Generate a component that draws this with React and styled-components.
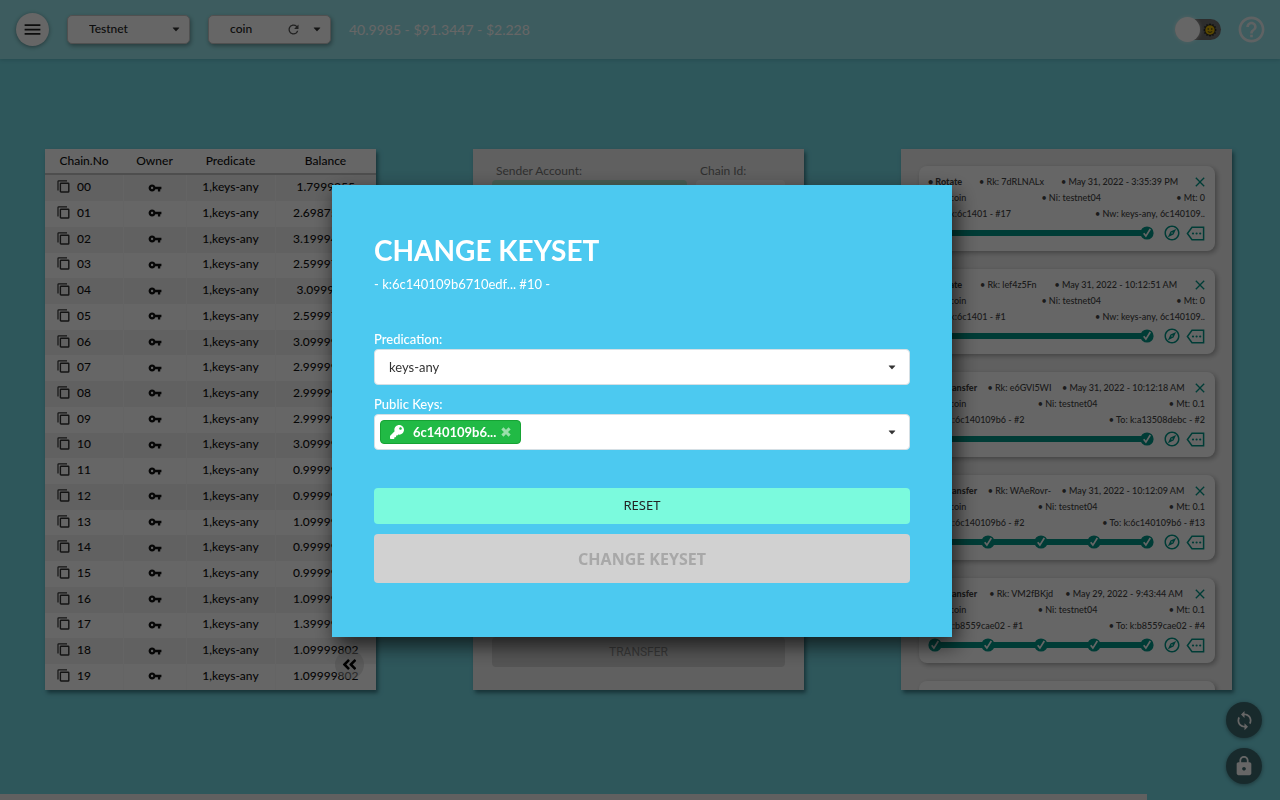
import React from "react";
import styled, { createGlobalStyle } from "styled-components";
import {
  MdMenu,
  MdVpnKey,
  MdSync,
  MdLock,
  MdHelpOutline,
  MdRefresh,
  MdClose,
  MdOutlineExplore,
} from "react-icons/md";
import { FaKey, FaAngleDoubleLeft } from "react-icons/fa";

const GlobalStyle = createGlobalStyle`
  *, *::before, *::after { box-sizing: border-box; }
  body {
    margin: 0;
    background: #73d9e4;
    font-family: Lato, "Liberation Sans", sans-serif;
    color: #222;
  }
  button, input, select { font-family: inherit; }
`;

const teal = "#009688";

const Page = styled.div`
  min-height: 100vh;
  display: flex;
  flex-direction: column;
`;

/* ---------- top bar ---------- */

const TopBar = styled.header`
  display: flex;
  align-items: center;
  height: 59px;
  padding: 0 13px 0 16px;
  background: #98e6ed;
  box-shadow: 0 1px 4px rgba(0, 60, 70, 0.2);
`;

const MenuButton = styled.button`
  display: grid;
  place-items: center;
  width: 33px;
  height: 33px;
  margin-right: 18px;
  padding: 0;
  border: 0;
  border-radius: 50%;
  background: #fff;
  color: #222;
  box-shadow: 0 1px 4px rgba(0, 0, 0, 0.4);
`;

const Picker = styled.div`
  position: relative;
  width: 123px;
  margin-right: 18px;
`;

const PickerSelect = styled.select`
  appearance: none;
  display: block;
  width: 100%;
  height: 29px;
  padding: 0 30px 2px 21px;
  border: 1px solid #c8c8c8;
  border-radius: 5px;
  background: #fff;
  color: #222;
  font-size: 12px;
  font-weight: 500;
  box-shadow: 1px 2px 4px rgba(0, 0, 0, 0.35);
`;

const PickerMarks = styled.span`
  position: absolute;
  top: 0;
  right: 10px;
  bottom: 0;
  display: flex;
  align-items: center;
  gap: 12px;
  color: #555;
  pointer-events: none;
`;

const Rates = styled.span`
  flex: 1;
  color: #fff;
  font-size: 14px;
`;

const ThemeSwitch = styled.label`
  position: relative;
  display: flex;
  align-items: center;
  justify-content: flex-end;
  width: 46px;
  height: 21px;
  margin-right: 15px;
  padding-right: 4px;
  border-radius: 11px;
  background: #707070;
`;

const SwitchInput = styled.input`
  appearance: none;
  position: absolute;
  top: -2px;
  left: 0;
  width: 25px;
  height: 25px;
  margin: 0;
  border-radius: 50%;
  background: #fff;
  box-shadow: 0 0 4px rgba(255, 255, 255, 0.6);
`;

const HelpButton = styled.button`
  display: grid;
  place-items: center;
  padding: 0;
  border: 0;
  background: none;
  color: #eef6f7;
`;

/* ---------- panels ---------- */

const Panels = styled.main`
  display: flex;
  justify-content: space-between;
  padding: 90px 48px 0 45px;
`;

const Panel = styled.section`
  position: relative;
  flex: 0 1 331px;
  background: ${(p) => p.$bg || "#f0f0f0"};
  box-shadow: 2px 3px 4px rgba(0, 40, 50, 0.5);
`;

const ChainTable = styled.table`
  width: 100%;
  height: 541px;
  border-collapse: collapse;
  table-layout: fixed;
  font-size: 12px;
  font-weight: 500;
  color: #111;
`;

const HeadCell = styled.th`
  width: ${(p) => p.$w};
  height: 25px;
  padding: 0 0 2px;
  border-bottom: 2px solid #c4c4c4;
  font-weight: 500;
  text-align: center;
`;

const ChainRow = styled.tr`
  &:nth-child(odd) {
    background: #f3f3f3;
  }
`;

const Cell = styled.td`
  padding: 0 0 3px;
  border-right: 1px solid #fafafa;
  text-align: center;
  vertical-align: middle;

  &:last-child {
    border-right: 0;
  }
  svg {
    vertical-align: middle;
  }
`;

const ChainNumber = styled.span`
  display: flex;
  align-items: center;
  gap: 7px;
  padding-left: 12px;
`;

const CollapseButton = styled.button`
  position: absolute;
  right: 12px;
  bottom: 11px;
  display: grid;
  place-items: center;
  width: 29px;
  height: 29px;
  padding: 0;
  border: 0;
  border-radius: 50%;
  background: rgba(200, 200, 200, 0.5);
  color: #000;
`;

const TransferForm = styled.form`
  display: flex;
  flex-direction: column;
  justify-content: space-between;
  height: 100%;
  padding: 14px 19px 23px;
`;

const FieldPair = styled.div`
  display: grid;
  grid-template-columns: 195px 1fr;
  gap: 9px;
`;

const FormLabel = styled.label`
  display: flex;
  flex-direction: column;
  gap: 1px;
  color: #777;
  font-size: 12px;
  line-height: 16px;
  text-indent: 4px;
`;

const FormInput = styled.input`
  width: 100%;
  height: 34px;
  border: 0;
  border-radius: 4px;
  background: ${(p) => p.$bg};
`;

const TransferButton = styled.button`
  height: 30px;
  border: 0;
  border-radius: 4px;
  background: #d4d4d4;
  color: #8c8c8c;
  font-family: Roboto, sans-serif;
  font-size: 12px;
`;

/* ---------- activity cards ---------- */

const CardList = styled.div`
  display: flex;
  flex-direction: column;
  gap: 18px;
  height: 0;
  min-height: 100%;
  padding: 17px 17px 0 18px;
  overflow: hidden;
`;

const Card = styled.article`
  flex: none;
  height: 85px;
  padding: 7px 10px 0 9px;
  border-radius: 8px;
  background: #fff;
  box-shadow: 2px 2px 5px rgba(0, 0, 0, 0.3);
`;

const CardLine = styled.div`
  display: flex;
  align-items: center;
  justify-content: space-between;
  height: 16px;
  font-size: 9px;
  font-weight: 500;
  color: #444;
  white-space: nowrap;
`;

const Kind = styled.strong`
  font-weight: 900;
`;

const CloseButton = styled.button`
  display: grid;
  place-items: center;
  width: 10px;
  height: 14px;
  padding: 0;
  border: 0;
  background: none;
  color: ${teal};

  svg {
    margin: 0 -3px;
  }
`;

const ProgressLine = styled.div`
  display: flex;
  align-items: center;
  gap: 5px;
  margin-top: 3px;
  color: ${teal};
`;

const Track = styled.div`
  display: flex;
  flex: 1;
  align-items: center;
  justify-content: space-between;
  margin-right: 4px;
  background: linear-gradient(${teal}, ${teal}) center / calc(100% - 8px) 6px no-repeat;

  svg {
    display: block;
  }
`;

const IconButton = styled.button`
  display: grid;
  place-items: center;
  padding: 0;
  border: 0;
  background: none;
  color: ${teal};
`;

/* ---------- floating buttons and scroll bar ---------- */

const Floating = styled.div`
  position: fixed;
  right: 18px;
  bottom: 16px;
  display: flex;
  flex-direction: column;
  gap: 10px;
`;

const RoundButton = styled.button`
  display: grid;
  place-items: center;
  width: 36px;
  height: 36px;
  padding: 0;
  border: 0;
  border-radius: 50%;
  background: #3c696f;
  color: #fff;
  box-shadow: 0 1px 4px rgba(0, 0, 0, 0.4);
`;

const BottomBar = styled.div`
  position: fixed;
  left: 0;
  bottom: 0;
  width: 89.6%;
  height: 6px;
  background: #f0f0f0;
`;

/* ---------- dialog ---------- */

const Backdrop = styled.div`
  position: fixed;
  inset: 0;
  display: grid;
  place-items: center;
  padding: 22px 0 0 4px;
  background: rgba(0, 0, 0, 0.6);
`;

const Dialog = styled.div`
  display: flex;
  flex-direction: column;
  width: 620px;
  max-width: 100%;
  padding: 47px 42px 54px;
  background: #4cc9f0;
  box-shadow: 4px 8px 20px rgba(0, 0, 0, 0.7);
`;

const Title = styled.h1`
  margin: 0;
  color: #fff;
  font-size: 28px;
  font-weight: 700;
  line-height: 36px;
`;

const Subtitle = styled.p`
  margin: 6px 0 36px;
  color: #fff;
  font-size: 13px;
  line-height: 20px;
`;

const DialogLabel = styled.label`
  margin-bottom: 1px;
  color: #fff;
  font-size: 13px;
  font-weight: 500;
  line-height: 18px;
`;

const Field = styled.div`
  position: relative;
  display: flex;
  align-items: center;
  height: 36px;
  margin-bottom: ${(p) => p.$after};
  border: 1px solid #d5dfe4;
  border-radius: 4px;
  background: #fff;
`;

const FieldSelect = styled.select`
  appearance: none;
  flex: 1;
  height: 100%;
  padding: 0 14px;
  border: 0;
  background: none;
  color: #333;
  font-size: 13px;
`;

const FieldInput = styled.input`
  flex: 1;
  min-width: 0;
  border: 0;
  outline: 0;
  background: none;
`;

const FieldArrow = styled.span`
  position: absolute;
  right: 13px;
  display: flex;
  pointer-events: none;
`;

const KeyChip = styled.span`
  display: flex;
  align-items: center;
  height: 24px;
  margin-left: 5px;
  padding: 0 9px;
  border: 1px solid #16a334;
  border-radius: 4px;
  background: #21ba45;
  color: #fff;
  font-size: 13px;
  font-weight: 700;
`;

const ChipText = styled.span`
  margin: 0 5px 0 9px;
`;

const ChipRemove = styled.button`
  display: grid;
  place-items: center;
  padding: 0;
  border: 0;
  background: none;
  color: rgba(255, 255, 255, 0.55);
`;

const ResetButton = styled.button`
  height: 36px;
  margin-bottom: 10px;
  padding: 0 0 2px;
  border: 0;
  border-radius: 4px;
  background: #7bfadd;
  color: #222;
  font-family: "Noto Sans", sans-serif;
  font-size: 13px;
`;

const SubmitButton = styled.button`
  height: 49px;
  border: 0;
  border-radius: 4px;
  background: #d1d1d1;
  color: #a8a8a8;
  font-family: "Noto Sans", sans-serif;
  font-size: 16px;
  font-weight: 700;
`;

/* ---------- drawings ---------- */

const Caret = () => (
  <svg width="8" height="5" viewBox="0 0 8 5" aria-hidden="true">
    <path d="M1.1 0.4h5.8q0.7 0 0.3 0.6L4.4 4.1q-0.4 0.4-0.8 0L0.8 1Q0.4 0.4 1.1 0.4z" fill="#333" />
  </svg>
);

const CopyIcon = () => (
  <svg width="13" height="13" viewBox="0 0 13 13" fill="none" stroke="#333" aria-hidden="true">
    <path d="M1 10.5V1.6q0-0.8 0.8-0.8H10" strokeWidth="1.2" />
    <rect x="3.4" y="3.2" width="8.4" height="8.8" rx="0.6" strokeWidth="1.4" />
  </svg>
);

const CheckNode = () => (
  <svg width="14" height="14" viewBox="0 0 14 14" aria-hidden="true">
    <circle cx="7" cy="7" r="6.6" fill={teal} />
    <path d="M3.7 7.2l2.2 2.9L10.3 3" fill="none" stroke="#fff" strokeWidth="1.7" />
  </svg>
);

const TagIcon = () => (
  <svg width="19" height="15" viewBox="0 0 19 15" aria-hidden="true">
    <path d="M6 1.2H17.6V13.8H6L1.4 7.5z" fill="none" stroke={teal} strokeWidth="1.5" />
    <circle cx="7" cy="7.5" r="1.1" fill={teal} />
    <circle cx="10.6" cy="7.5" r="1.1" fill={teal} />
    <circle cx="14.2" cy="7.5" r="1.1" fill={teal} />
  </svg>
);

const RemoveIcon = () => (
  <svg width="10" height="10" viewBox="0 0 10 10" aria-hidden="true">
    <path d="M1.4 1.4l7.2 7.2M8.6 1.4L1.4 8.6" stroke="currentColor" strokeWidth="3" />
  </svg>
);

const rays = Array.from({ length: 12 }, (_, i) => i * 30);

const SunIcon = () => (
  <svg width="14" height="14" viewBox="0 0 14 14" aria-hidden="true">
    {rays.map((a) => (
      <path key={a} d="M5.4 2.4L7 0l1.6 2.4z" fill="#222" transform={`rotate(${a} 7 7)`} />
    ))}
    <circle cx="7" cy="7" r="5" fill="#e0b400" stroke="#222" strokeWidth="0.6" />
    <circle cx="5.2" cy="6" r="0.7" fill="#222" />
    <circle cx="8.8" cy="6" r="0.7" fill="#222" />
    <path d="M4.8 8.6q2.2 1.6 4.4 0" fill="none" stroke="#222" strokeWidth="0.8" />
  </svg>
);

/* ---------- data ---------- */

const balances = [
  "1.7999255", "2.69875802", "3.19994802", "2.59997802", "3.0999802",
  "2.59997802", "3.09999802", "2.99999802", "2.99999802", "2.99999802",
  "3.09999802", "0.99999802", "0.99999802", "1.09999802", "0.99999802",
  "0.99999802", "1.09999802", "1.39999802", "1.09999802", "1.09999802",
];

const activity = [
  { kind: "Rotate", rk: "7dRLNALx", date: "May 31, 2022 - 3:35:39 PM", amount: "0", from: "Ac: k:6c1401 - #17", to: "Nw: keys-any, 6c140109..", nodes: 2 },
  { kind: "Rotate", rk: "lef4z5Fn", date: "May 31, 2022 - 10:12:51 AM", amount: "0", from: "Ac: k:6c1401 - #1", to: "Nw: keys-any, 6c140109..", nodes: 2 },
  { kind: "X-Transfer", rk: "e6GVl5WI", date: "May 31, 2022 - 10:12:18 AM", amount: "0.1", from: "Fr: k:6c140109b6 - #2", to: "To: k:a13508debc - #2", nodes: 2 },
  { kind: "X-Transfer", rk: "WAeRovr-", date: "May 31, 2022 - 10:12:09 AM", amount: "0.1", from: "Fr: k:6c140109b6 - #2", to: "To: k:6c140109b6 - #13", nodes: 5 },
  { kind: "X-Transfer", rk: "VM2fBKjd", date: "May 29, 2022 - 9:43:44 AM", amount: "0.1", from: "Fr: k:b8559cae02 - #1", to: "To: k:b8559cae02 - #4", nodes: 5 },
];

function ActivityCard({ item }) {
  return (
    <Card>
      <CardLine>
        <Kind>• {item.kind}</Kind>
        <span>• Rk: {item.rk}</span>
        <span>• {item.date}</span>
        <CloseButton type="button" aria-label="Dismiss">
          <MdClose size={16} />
        </CloseButton>
      </CardLine>
      <CardLine>
        <span>• Tk: coin</span>
        <span>• Ni: testnet04</span>
        <span>• Mt: {item.amount}</span>
      </CardLine>
      <CardLine>
        <span>• {item.from}</span>
        <span>• {item.to}</span>
      </CardLine>
      <ProgressLine>
        <Track>
          {Array.from({ length: item.nodes }, (_, i) => (
            <CheckNode key={i} />
          ))}
        </Track>
        <IconButton type="button" aria-label="Explore">
          <MdOutlineExplore size={18} />
        </IconButton>
        <IconButton type="button" aria-label="More">
          <TagIcon />
        </IconButton>
      </ProgressLine>
    </Card>
  );
}

export default function App() {
  return (
    <Page>
      <GlobalStyle />
      <TopBar>
        <MenuButton type="button" aria-label="Menu">
          <MdMenu size={21} />
        </MenuButton>
        <Picker>
          <PickerSelect aria-label="Network" defaultValue="Testnet">
            <option>Testnet</option>
          </PickerSelect>
          <PickerMarks>
            <Caret />
          </PickerMarks>
        </Picker>
        <Picker>
          <PickerSelect aria-label="Token" defaultValue="coin">
            <option>coin</option>
          </PickerSelect>
          <PickerMarks>
            <MdRefresh size={15} />
            <Caret />
          </PickerMarks>
        </Picker>
        <Rates>40.9985 - $91.3447 - $2.228</Rates>
        <ThemeSwitch>
          <SunIcon />
          <SwitchInput type="checkbox" aria-label="Light theme" />
        </ThemeSwitch>
        <HelpButton type="button" aria-label="Help">
          <MdHelpOutline size={31} />
        </HelpButton>
      </TopBar>

      <Panels>
        <Panel $bg="#fff">
          <ChainTable>
            <thead>
              <tr>
                <HeadCell $w="78px">Chain.No</HeadCell>
                <HeadCell $w="63px">Owner</HeadCell>
                <HeadCell $w="89px">Predicate</HeadCell>
                <HeadCell>Balance</HeadCell>
              </tr>
            </thead>
            <tbody>
              {balances.map((balance, i) => (
                <ChainRow key={i}>
                  <Cell>
                    <ChainNumber>
                      <CopyIcon />
                      {String(i).padStart(2, "0")}
                    </ChainNumber>
                  </Cell>
                  <Cell>
                    <MdVpnKey size={14} />
                  </Cell>
                  <Cell>1,keys-any</Cell>
                  <Cell>{balance}</Cell>
                </ChainRow>
              ))}
            </tbody>
          </ChainTable>
          <CollapseButton type="button" aria-label="Collapse">
            <FaAngleDoubleLeft size={17} />
          </CollapseButton>
        </Panel>

        <Panel>
          <TransferForm>
            <FieldPair>
              <FormLabel>
                Sender Account:
                <FormInput $bg="#b5ecd5" />
              </FormLabel>
              <FormLabel>
                Chain Id:
                <FormInput $bg="#fff" />
              </FormLabel>
            </FieldPair>
            <TransferButton type="button" disabled>
              TRANSFER
            </TransferButton>
          </TransferForm>
        </Panel>

        <Panel>
          <CardList>
            {activity.map((item) => (
              <ActivityCard key={item.rk} item={item} />
            ))}
            <Card />
          </CardList>
        </Panel>
      </Panels>

      <Floating>
        <RoundButton type="button" aria-label="Sync">
          <MdSync size={21} />
        </RoundButton>
        <RoundButton type="button" aria-label="Lock">
          <MdLock size={22} />
        </RoundButton>
      </Floating>
      <BottomBar />

      <Backdrop>
        <Dialog role="dialog" aria-modal="true" aria-labelledby="keyset-title">
          <Title id="keyset-title">CHANGE KEYSET</Title>
          <Subtitle>- k:6c140109b6710edf... #10 -</Subtitle>

          <DialogLabel htmlFor="predication">Predication:</DialogLabel>
          <Field $after="10px">
            <FieldSelect id="predication" defaultValue="keys-any">
              <option>keys-any</option>
            </FieldSelect>
            <FieldArrow>
              <Caret />
            </FieldArrow>
          </Field>

          <DialogLabel htmlFor="public-keys">Public Keys:</DialogLabel>
          <Field $after="38px">
            <KeyChip>
              <FaKey size={14} />
              <ChipText>6c140109b6...</ChipText>
              <ChipRemove type="button" aria-label="Remove key">
                <RemoveIcon />
              </ChipRemove>
            </KeyChip>
            <FieldInput id="public-keys" />
            <FieldArrow>
              <Caret />
            </FieldArrow>
          </Field>

          <ResetButton type="button">RESET</ResetButton>
          <SubmitButton type="button" disabled>
            CHANGE KEYSET
          </SubmitButton>
        </Dialog>
      </Backdrop>
    </Page>
  );
}
